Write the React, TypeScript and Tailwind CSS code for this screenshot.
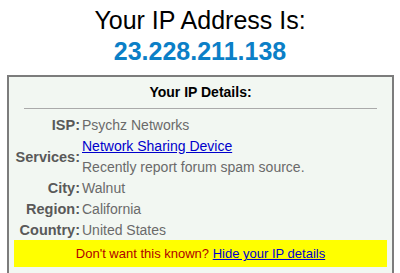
import React from 'react';

const rows: { label: string; values: React.ReactNode[] }[] = [
  { label: 'ISP:', values: ['Psychz Networks'] },
  {
    label: 'Services:',
    values: [
      <a key="svc" href="#" className="text-[#0000cc] underline">Network Sharing Device</a>,
      'Recently report forum spam source.',
    ],
  },
  { label: 'City:', values: ['Walnut'] },
  { label: 'Region:', values: ['California'] },
  { label: 'Country:', values: ['United States'] },
];

export default function App() {
  return (
    <div className="h-[273px] overflow-hidden bg-white" style={{ fontFamily: '"Liberation Sans", Arial, sans-serif' }}>
      <div className="pt-[5px] text-center text-[25px] leading-[31px]">
        <div className="text-black">Your IP Address Is:</div>
        <div className="font-bold text-[#0b7fc7]">23.228.211.138</div>
      </div>

      <div className="mt-[8px] ml-[7px] mr-[6px] border-2 border-[#7c7c7c] bg-[#f2f7f2] pb-10">
        <div className="pt-[7px] text-center text-[14px] font-bold leading-[16px] text-black">Your IP Details:</div>
        <div className="mx-[15px] mt-[8px] h-px bg-[#aaaaaa]" />

        <div className="mt-[6px] text-[14px] leading-[21px]">
          {rows.map((row) => (
            <div key={row.label} className="flex items-center">
              <div className="w-[71px] shrink-0 text-right text-[14.5px] font-bold text-[#595959]">{row.label}</div>
              <div className="pl-[2px] text-[#6a6a6a]">
                {row.values.map((v, i) => (
                  <div key={i}>{v}</div>
                ))}
              </div>
            </div>
          ))}
        </div>

        <div className="mx-[5px] mt-[-1px] h-[27px] bg-[#ffff00] text-center text-[13px] leading-[27px] text-[#b00000]">
          Don't want this known?{' '}
          <a href="#" className="text-[#0000cc] underline">Hide your IP details</a>
        </div>
      </div>
    </div>
  );
}
